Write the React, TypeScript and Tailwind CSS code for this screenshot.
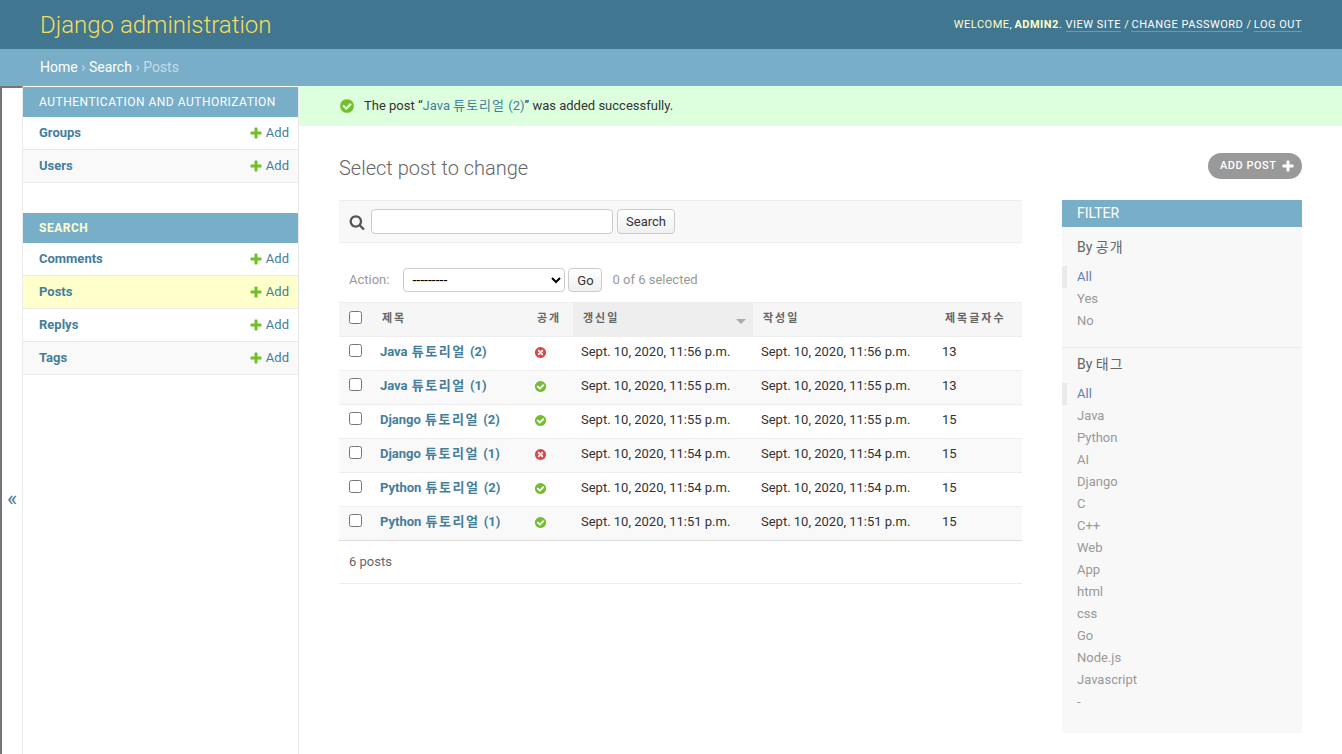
import React from "react";

const font = "font-['Roboto','Noto_Sans_CJK_KR',sans-serif]";

const PlusIcon = ({ className = "" }: { className?: string }) => (
  <svg viewBox="0 0 1792 1792" className={className} fill="currentColor">
    <path d="M1600 796v192q0 40-28 68t-68 28h-416v416q0 40-28 68t-68 28h-192q-40 0-68-28t-28-68v-416h-416q-40 0-68-28t-28-68v-192q0-40 28-68t68-28h416v-416q0-40 28-68t68-28h192q40 0 68 28t28 68v416h416q40 0 68 28t28 68z" />
  </svg>
);

const YesIcon = ({ className = "" }: { className?: string }) => (
  <svg viewBox="0 0 1792 1792" className={className} fill="#70bf2b">
    <path d="M1412 734q0-28-18-46l-91-90q-19-19-45-19t-45 19l-408 407-226-226q-19-19-45-19t-45 19l-91 90q-18 18-18 46 0 27 18 45l362 362q19 19 45 19 27 0 46-19l543-543q18-18 18-45zm252 162q0 209-103 385.5t-279.5 279.5-385.5 103-385.5-103-279.5-279.5-103-385.5 103-385.5 279.5-279.5 385.5-103 385.5 103 279.5 279.5 103 385.5z" />
  </svg>
);

const NoIcon = ({ className = "" }: { className?: string }) => (
  <svg viewBox="0 0 1792 1792" className={className} fill="#dd4646">
    <path d="M1277 1122q0-26-19-45l-181-181 181-181q19-19 19-45 0-27-19-46l-90-90q-19-19-46-19-26 0-45 19l-181 181-181-181q-19-19-45-19-27 0-46 19l-90 90q-19 19-19 46 0 26 19 45l181 181-181 181q-19 19-19 45 0 27 19 46l90 90q19 19 46 19 26 0 45-19l181-181 181 181q19 19 45 19 27 0 46-19l90-90q19-19 19-46zm387-226q0 209-103 385.5t-279.5 279.5-385.5 103-385.5-103-279.5-279.5-103-385.5 103-385.5 279.5-279.5 385.5-103 385.5 103 279.5 279.5 103 385.5z" />
  </svg>
);

const SearchIcon = ({ className = "" }: { className?: string }) => (
  <svg viewBox="0 0 1792 1792" className={className} fill="#555555">
    <path d="M1216 832q0-185-131.5-316.5t-316.5-131.5-316.5 131.5-131.5 316.5 131.5 316.5 316.5 131.5 316.5-131.5 131.5-316.5zm512 832q0 52-38 90t-90 38q-54 0-90-38l-343-342q-179 124-399 124-143 0-273.5-55.5t-225-150-150-225-55.5-273.5 55.5-273.5 150-225 225-150 273.5-55.5 273.5 55.5 225 150 150 225 55.5 273.5q0 220-124 399l343 343q37 37 37 90z" />
  </svg>
);

const NavRow = ({ name, className }: { name: string; className: string }) => (
  <div className={`flex h-[33px] items-center justify-between border-b border-[#eaeaea] pl-4 pr-[9px] text-[13px] ${className}`}>
    <span className="font-bold text-[#447e9b]">{name}</span>
    <span className="flex items-center text-[#447e9b]">
      <PlusIcon className="mr-[3px] h-[14px] w-[14px] text-[#70bf2b]" />
      Add
    </span>
  </div>
);

const NavHeader = ({ title, className }: { title: string; className: string }) => (
  <div className={`flex h-[30px] items-center bg-[#79aec8] pl-4 text-[12px] tracking-[0.5px] ${className}`}>{title}</div>
);

const rows = [
  { lang: "Java", num: "2", ok: false, date: "Sept. 10, 2020, 11:56 p.m.", count: 13 },
  { lang: "Java", num: "1", ok: true, date: "Sept. 10, 2020, 11:55 p.m.", count: 13 },
  { lang: "Django", num: "2", ok: true, date: "Sept. 10, 2020, 11:55 p.m.", count: 15 },
  { lang: "Django", num: "1", ok: false, date: "Sept. 10, 2020, 11:54 p.m.", count: 15 },
  { lang: "Python", num: "2", ok: true, date: "Sept. 10, 2020, 11:54 p.m.", count: 15 },
  { lang: "Python", num: "1", ok: true, date: "Sept. 10, 2020, 11:51 p.m.", count: 15 },
];

const Checkbox = () => (
  <input type="checkbox" className="block h-[13px] w-[13px]" />
);

const FilterList = ({ title, items, topClass }: { title: string; items: string[]; topClass: string }) => (
  <div>
    <h3 className={`pl-[15px] text-[14px] leading-[20px] text-[#666] ${topClass}`}>
      {title.slice(0, 3)}
      <span className="tracking-[1px]">{title.slice(3)}</span>
    </h3>
    <ul className="mt-[9px] text-[13px]">
      <li className="flex h-[22px] items-center border-l-[5px] border-[#eaeaea] pl-[10px] text-[#5b80b2]">All</li>
      {items.map((item) => (
        <li key={item} className="flex h-[22px] items-center pl-[15px] text-[#999]">
          {item}
        </li>
      ))}
    </ul>
  </div>
);

const App: React.FC = () => {
  return (
    <div className={`flex h-[754px] w-[1342px] flex-col overflow-hidden bg-white text-[14px] text-[#333] ${font}`}>
      {/* Header */}
      <header className="flex h-[49px] shrink-0 items-center justify-between bg-[#417690] pl-10 pr-10">
        <h1 className="text-[24px] font-light text-[#f5dd5d]">Django administration</h1>
        <div className="pt-[1px] text-[11px] tracking-[0.5px] text-[#ffc]">
          WELCOME, <strong className="-ml-px font-bold">ADMIN2</strong>.{" "}
          <a className="border-b border-[#ffffff40] text-white">VIEW SITE</a> /{" "}
          <a className="-ml-px border-b border-[#ffffff40] text-white">CHANGE PASSWORD</a> /{" "}
          <a className="-ml-px border-b border-[#ffffff40] text-white">LOG OUT</a>
        </div>
      </header>

      {/* Breadcrumbs */}
      <div className="flex h-[37px] shrink-0 items-center bg-[#79aec8] pl-10 text-[14px] text-white">
        <span>Home</span>
        <span className="mx-[3.5px] text-[#c4dce8]">›</span>
        <span>Search</span>
        <span className="mx-[3.5px] text-[#c4dce8]">›</span>
        <span className="text-[#c4dce8]">Posts</span>
      </div>

      <div className="flex min-h-0 flex-1">
        {/* Sidebar toggle */}
        <div className="w-[23px] shrink-0 border-l-2 border-r border-t-2 border-l-[#767676] border-r-[#eaeaea] border-t-[#767676] pl-[5px] pt-[399px] text-[22px] leading-[24px] text-[#447e9b]">
          «
        </div>

        {/* Sidebar */}
        <nav className="w-[276px] shrink-0 border-r border-[#eaeaea] pt-px">
          <NavHeader title="AUTHENTICATION AND AUTHORIZATION" className="text-white" />
          <NavRow name="Groups" className="bg-white" />
          <NavRow name="Users" className="bg-[#f9f9f9]" />
          <div className="mt-[30px]">
            <NavHeader title="SEARCH" className="font-bold text-[#ffc]" />
          </div>
          <NavRow name="Comments" className="bg-white" />
          <NavRow name="Posts" className="bg-[#ffc]" />
          <NavRow name="Replys" className="bg-white" />
          <NavRow name="Tags" className="bg-[#f9f9f9]" />
        </nav>

        {/* Main */}
        <main className="min-w-0 flex-1">
          <div className="flex h-[40px] items-center bg-[#dfd] pl-[40px] text-[13px]">
            <YesIcon className="mr-[9px] h-[16px] w-[16px]" />
            <span>
              The post “<a className="text-[#447e9b]">Java <span className="tracking-[1px]">튜토리얼</span> (2)</a>” was added successfully.
            </span>
          </div>

          <div className="px-10">
            <div className="flex items-start justify-between pt-[27px]">
              <h2 className="text-[20px] font-light leading-[30px] text-[#666]">Select post to change</h2>
              <a className="flex h-[26px] w-[94px] items-center justify-between rounded-[15px] bg-[#999] pl-3 pr-[7px] text-[11px] font-medium tracking-[0.5px] text-white">
                ADD POST
                <PlusIcon className="h-[14px] w-[14px]" />
              </a>
            </div>

            <div className="mt-[17px] flex items-start gap-10">
              {/* Changelist */}
              <div className="w-[683px] shrink-0">
                <div className="flex h-[43px] items-center border-y border-[#eee] bg-[#f8f8f8] pl-[10px] text-[13px]">
                  <SearchIcon className="mr-[6px] h-[16px] w-[16px]" />
                  <input className="h-[25px] w-[242px] rounded-[4px] border border-[#ccc] bg-white" />
                  <button className="ml-[4px] h-[25px] w-[58px] rounded-[4px] border border-[#ccc] bg-[linear-gradient(#fff,#f0f0f0)] text-[13px] text-[#333]">
                    Search
                  </button>
                </div>

                <div className="mt-[25px] flex h-[24px] items-center pl-[10px] text-[13px] text-[#999]">
                  <span>Action:</span>
                  <select className="ml-[14px] h-[24px] w-[162px] rounded-[4px] border border-[#ccc] bg-white pl-[4px] text-[14px] text-black">
                    <option>---------</option>
                  </select>
                  <button className="ml-[3px] h-[24px] w-[34px] rounded-[4px] border border-[#ccc] bg-[linear-gradient(#fff,#f0f0f0)] pt-px text-[13px] text-[#333]">
                    Go
                  </button>
                  <span className="ml-[10px]">0 of 6 selected</span>
                </div>

                <table className="mt-[10px] w-[683px] table-fixed border-collapse text-[13px]">
                  <colgroup>
                    <col className="w-[33px]" />
                    <col className="w-[153px]" />
                    <col className="w-[48px]" />
                    <col className="w-[180px]" />
                    <col className="w-[180px]" />
                    <col className="w-[89px]" />
                  </colgroup>
                  <thead>
                    <tr className="h-[34px] border-y border-[#eee] bg-[#f6f6f6] text-left text-[11px] font-bold tracking-[2px] text-[#666]">
                      <th className="pb-[5px] pl-[10px]"><Checkbox /></th>
                      <th className="pl-[10px]">제목</th>
                      <th className="pl-[12px]">공개</th>
                      <th className="relative bg-[#eee] pl-[10px]">
                        갱신일
                        <span className="absolute right-[7px] top-[16px] h-0 w-0 border-x-[5px] border-t-[5px] border-x-transparent border-t-[#aaa]" />
                      </th>
                      <th className="pl-[10px]">작성일</th>
                      <th className="pl-[12px]">제목글자수</th>
                    </tr>
                  </thead>
                  <tbody>
                    {rows.map((row, i) => (
                      <tr
                        key={row.lang + row.num}
                        className={`h-[34px] border-b ${i === rows.length - 1 ? "border-[#ddd]" : "border-[#eee]"} ${i % 2 === 0 ? "bg-white" : "bg-[#f9f9f9]"}`}
                      >
                        <td className="pb-[7px] pl-[10px]"><Checkbox /></td>
                        <td className="pb-[3px] pl-[8px] font-bold text-[#447e9b]">
                          {row.lang} <span className="mx-px tracking-[1.5px]">튜토리얼</span> ({row.num})
                        </td>
                        <td className="pb-[2px] pl-[9px]">
                          {row.ok ? <YesIcon className="h-[13px] w-[13px]" /> : <NoIcon className="h-[13px] w-[13px]" />}
                        </td>
                        <td className="pb-[3px] pl-[8px]">{row.date}</td>
                        <td className="pb-[3px] pl-[8px]">{row.date}</td>
                        <td className="pb-[3px] pl-[9px]">{row.count}</td>
                      </tr>
                    ))}
                  </tbody>
                </table>

                <div className="flex h-[43px] items-center border-b border-[#eee] pl-[10px] text-[13px] text-[#666]">6 posts</div>
              </div>

              {/* Filter */}
              <aside className="w-[240px] shrink-0 bg-[#f8f8f8]">
                <div className="flex h-[27px] items-center bg-[#79aec8] pl-[15px] text-[14px] text-white">FILTER</div>
                <div className="border-b border-[#eaeaea] pb-[15px]">
                  <FilterList title="By 공개" items={["Yes", "No"]} topClass="pt-[10px]" />
                </div>
                <div className="pb-[20px]">
                  <FilterList
                    title="By 태그"
                    items={["Java", "Python", "AI", "Django", "C", "C++", "Web", "App", "html", "css", "Go", "Node.js", "Javascript", "-"]}
                    topClass="pt-[6px]"
                  />
                </div>
              </aside>
            </div>
          </div>
        </main>
      </div>
    </div>
  );
};

export default App;
